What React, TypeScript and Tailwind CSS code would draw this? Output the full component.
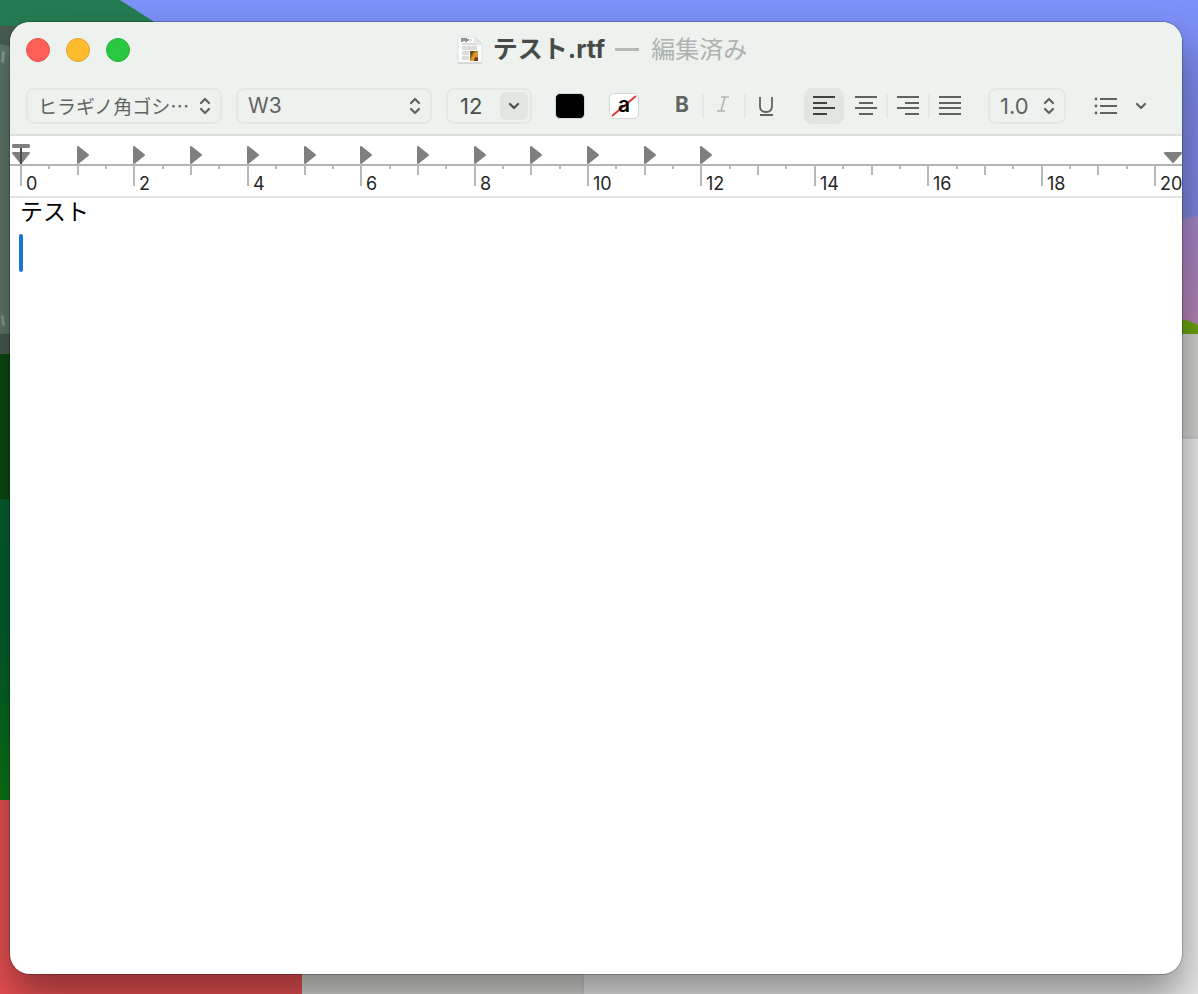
import { useEffect, useRef, useState, type ReactNode } from 'react'

type Align = 'left' | 'center' | 'right' | 'justify'

const RULER_ORIGIN = 11
const CM_IN_PX = 56.7

const ALIGN_PATHS: Record<Align, string> = {
  left: 'M1 2h22M1 8h14M1 13h22M1 19h14',
  center: 'M1 2h22M5 8h14M1 13h22M5 19h14',
  right: 'M1 2h22M9 8h14M1 13h22M9 19h14',
  justify: 'M1 2h22M1 8h22M1 13h22M1 19h22',
}

const ALIGNMENTS: { id: Align; label: string }[] = [
  { id: 'left', label: '左揃え' },
  { id: 'center', label: '中央揃え' },
  { id: 'right', label: '右揃え' },
  { id: 'justify', label: '両端揃え' },
]

function Wallpaper() {
  return (
    <svg
      className="absolute inset-0 size-full"
      viewBox="0 0 1198 994"
      preserveAspectRatio="none"
      aria-hidden="true"
    >
      <defs>
        <linearGradient id="sky" x1="0" y1="0" x2="0" y2="1">
          <stop offset="0" stopColor="#7b93fb" />
          <stop offset="0.3" stopColor="#7c86e6" />
          <stop offset="1" stopColor="#7f7dcc" />
        </linearGradient>
        <linearGradient id="mauve" x1="0" y1="0" x2="0" y2="1">
          <stop offset="0" stopColor="#a184c6" />
          <stop offset="1" stopColor="#b381b0" />
        </linearGradient>
        <linearGradient id="forest" x1="0" y1="0" x2="0" y2="1">
          <stop offset="0" stopColor="#04602f" />
          <stop offset="0.5" stopColor="#01602a" />
          <stop offset="1" stopColor="#0b7714" />
        </linearGradient>
      </defs>
      <rect width="1198" height="340" fill="url(#sky)" />
      <path d="M1170 222L1198 216V334H1170z" fill="url(#mauve)" />
      <path d="M1170 318Q1185 318 1198 325V334H1170z" fill="#68a30f" />
      <path d="M0 0H120L170 32H0z" fill="#257c52" />
      <rect y="26" width="30" height="328" fill="#475c50" />
      <path d="M0 44Q14 46 22 54V330Q12 334 0 334z" fill="#5e7868" />
      <path d="M2 51L5 52L4 63L1 62z" fill="#8a9c8f" />
      <path d="M1 315L4 316L5 326L2 325z" fill="#8a9c8f" />
      <rect y="354" width="30" height="146" fill="#0a4a10" />
      <rect y="499" width="30" height="302" fill="url(#forest)" />
      <rect y="800" width="302" height="194" fill="#e95052" />
      <rect x="302" y="900" width="281" height="94" fill="#d6d6d4" />
      <rect x="583" y="334" width="615" height="660" fill="#e8e8e8" />
      <rect x="1100" y="334" width="98" height="104" fill="#cfcfcd" />
      <path d="M1100 438H1198M583 900V994" stroke="#b9b9b8" />
    </svg>
  )
}

function DocumentIcon() {
  return (
    <svg className="h-7 w-[26px] shrink-0" viewBox="0 0 26 28" aria-hidden="true">
      <path d="M1 1H18L25 8V27H1z" fill="#fbfbfb" stroke="#dfe2df" />
      <path d="M1 27H25" stroke="#c4c7c4" />
      <path d="M18 1L17 9L25 8z" fill="#e6e8e6" stroke="#cfd2cf" strokeWidth="0.6" />
      <path d="M5 2V6M7 2V5M9 2V6M11 3V5" stroke="#4a4a4a" strokeWidth="1.2" />
      <path d="M13 4H15M5 8H17M5 11H20M5 13H20M5 16H12M5 18H12M5 21H12M5 23H12" stroke="#bcc0c0" strokeWidth="1.2" />
      <rect x="13" y="15" width="8" height="10" fill="#9b6a1c" />
      <path d="M13 25L17 17L21 15V20L17 25z" fill="#d99a27" />
      <path d="M13 15H17L14 20z" fill="#5c4c2a" />
      <path d="M18 21L21 22V25H17z" fill="#6f3b16" />
    </svg>
  )
}

function UpDownIcon() {
  return (
    <svg className="h-5 w-3" viewBox="0 0 12 20" fill="none" aria-hidden="true">
      <path
        d="M2 7L6 3L10 7M2 13L6 17L10 13"
        stroke="currentColor"
        strokeWidth="2.2"
        strokeLinecap="round"
        strokeLinejoin="round"
      />
    </svg>
  )
}

function DownIcon() {
  return (
    <svg className="h-3 w-3" viewBox="0 0 12 12" fill="none" aria-hidden="true">
      <path
        d="M2 4L6 8L10 4"
        stroke="currentColor"
        strokeWidth="2.2"
        strokeLinecap="round"
        strokeLinejoin="round"
      />
    </svg>
  )
}

interface PopupProps {
  label: string
  options: string[]
  className: string
  textClassName: string
}

function Popup({ label, options, className, textClassName }: PopupProps) {
  return (
    <div className={`grid shrink-0 items-center text-[#5f6461] ${className}`}>
      <select
        aria-label={label}
        className={`col-start-1 row-start-1 h-9 w-full appearance-none rounded-lg border-2 border-[#e3e8e4] bg-transparent pr-7 pl-[10px] outline-none ${textClassName}`}
      >
        {options.map((option) => (
          <option key={option}>{option}</option>
        ))}
      </select>
      <span className="pointer-events-none col-start-1 row-start-1 mr-[11px] justify-self-end">
        <UpDownIcon />
      </span>
    </div>
  )
}

function Divider() {
  return <span className="h-6 w-[2px] shrink-0 bg-[#e3e8e4]" />
}

interface StyleButtonProps {
  label: string
  className?: string
  children: ReactNode
}

function StyleButton({ label, className = '', children }: StyleButtonProps) {
  return (
    <button
      type="button"
      aria-label={label}
      className={`flex h-9 w-10 shrink-0 items-center justify-center ${className}`}
    >
      {children}
    </button>
  )
}

function TitleBar() {
  return (
    <header className="grid h-14 grid-cols-[1fr_auto_1fr] items-center pr-1 pl-4">
      <div className="flex gap-4">
        <button type="button" aria-label="閉じる" className="size-6 rounded-full border border-[#e2544c] bg-[#fe5f57]" />
        <button type="button" aria-label="しまう" className="size-6 rounded-full border border-[#dfa32b] bg-[#febc2e]" />
        <button type="button" aria-label="フルスクリーン" className="size-6 rounded-full border border-[#24b03a] bg-[#28c840]" />
      </div>
      <h1 className="flex items-center text-2xl whitespace-nowrap">
        <DocumentIcon />
        <span className="ml-[10px] text-[25px] font-bold text-[#474b48]">テスト.rtf</span>
        <span className="mx-[10px] h-[3px] w-6 bg-[#b4b9b5]" />
        <span className="ml-[2px] text-[#aeb3af]">編集済み</span>
      </h1>
    </header>
  )
}

function Toolbar() {
  const [align, setAlign] = useState<Align>('left')

  return (
    <div className="flex h-[58px] items-center border-b-2 border-[#dcdfdc] px-4 text-[#5f6461]">
      <Popup
        label="フォント"
        options={['ヒラギノ角ゴシ…', 'Helvetica']}
        className="w-[196px]"
        textClassName="font-['Noto_Sans_CJK_JP',sans-serif] text-[19px]"
      />
      <Popup
        label="書体"
        options={['W3', 'W6']}
        className="ml-[14px] w-[196px]"
        textClassName="pb-1 text-[21px]"
      />

      {/* Font size */}
      <div className="ml-[14px] flex h-9 w-[86px] shrink-0 items-center rounded-lg border-2 border-[#e3e8e4] pr-[2px] pl-3 text-[#4b4f4c]">
        <input
          aria-label="サイズ"
          defaultValue="12"
          className="w-full min-w-0 bg-transparent text-[22px] outline-none"
        />
        <button
          type="button"
          aria-label="サイズを選択"
          className="flex h-7 w-7 shrink-0 items-center justify-center rounded-md bg-[#e1e6e2]"
        >
          <DownIcon />
        </button>
      </div>

      {/* Colours */}
      <button
        type="button"
        aria-label="文字の色"
        className="ml-[23px] h-[26px] w-[30px] shrink-0 rounded-[5px] border border-[#d5dad6] bg-black"
      />
      <button
        type="button"
        aria-label="背景の色"
        className="ml-6 grid h-[26px] w-[30px] shrink-0 place-items-center rounded-[5px] border border-[#d2d7d3] bg-white"
      >
        <svg className="col-start-1 row-start-1 h-6 w-7" viewBox="0 0 28 24" aria-hidden="true">
          <path d="M2 22L26 2" stroke="#dd3a3f" strokeWidth="2" />
        </svg>
        <span className="col-start-1 row-start-1 pb-[2px] text-[21px] leading-5 font-semibold text-black">a</span>
      </button>

      {/* Character style */}
      <div className="ml-[23px] flex shrink-0 items-center">
        <StyleButton label="ボールド">
          <span className="pb-[2px] text-[21px] font-bold">B</span>
        </StyleButton>
        <Divider />
        <StyleButton label="イタリック" className="text-[#b0b5b1]">
          <svg className="h-5 w-4" viewBox="0 0 16 20" fill="none" stroke="currentColor" strokeWidth="1.6" aria-hidden="true">
            <path d="M5 1H13M1 15H9M9 1L5 15" />
          </svg>
        </StyleButton>
        <Divider />
        <StyleButton label="アンダーライン">
          <svg className="h-6 w-4" viewBox="0 0 16 24" fill="none" stroke="currentColor" strokeWidth="1.8" aria-hidden="true">
            <path d="M2 3V12Q2 18 8 18T14 12V3M2 21H15" />
          </svg>
        </StyleButton>
      </div>

      {/* Paragraph alignment */}
      <div className="ml-[18px] flex shrink-0 items-center">
        {ALIGNMENTS.map(({ id, label }, index) => (
          <div key={id} className="flex items-center">
            {index > 0 && (
              <span className={`h-6 w-[2px] ${index > 1 ? 'bg-[#e3e8e4]' : 'bg-transparent'}`} />
            )}
            <button
              type="button"
              aria-label={label}
              aria-pressed={align === id}
              onClick={() => { setAlign(id) }}
              className={`flex h-9 w-10 items-center justify-center rounded-lg pb-[2px] ${
                align === id ? 'bg-[#e1e6e2] text-[#3f4340]' : ''
              }`}
            >
              <svg className="h-[21px] w-6" viewBox="0 0 24 21" fill="none" aria-hidden="true">
                <path d={ALIGN_PATHS[id]} stroke="currentColor" strokeWidth="1.8" />
              </svg>
            </button>
          </div>
        ))}
      </div>

      <Popup
        label="行間隔"
        options={['1.0', '1.5', '2.0']}
        className="ml-[18px] w-[78px]"
        textClassName="pb-1 text-[22px]"
      />

      <button
        type="button"
        aria-label="リスト"
        className="ml-7 flex h-9 shrink-0 items-center gap-[17px]"
      >
        <svg className="h-[18px] w-6" viewBox="0 0 24 18" fill="none" stroke="currentColor" strokeWidth="1.8" aria-hidden="true">
          <path d="M6 2H23M6 9H23M6 16H23" />
          <path d="M2 2H2.01M2 9H2.01M2 16H2.01" strokeWidth="2.8" strokeLinecap="round" />
        </svg>
        <DownIcon />
      </button>
    </div>
  )
}

function Ruler() {
  const ref = useRef<HTMLDivElement>(null)
  const [width, setWidth] = useState(0)

  useEffect(() => {
    const element = ref.current
    if (!element) return
    const observer = new ResizeObserver(() => { setWidth(element.clientWidth) })
    observer.observe(element)
    return () => { observer.disconnect() }
  }, [])

  const halfCount = Math.max(0, Math.floor(((width - RULER_ORIGIN) / CM_IN_PX) * 2) + 1)
  const halves = Array.from({ length: halfCount }, (_, i) => i)
  const tabStops = Array.from({ length: 12 }, (_, i) => i + 1)
  const at = (cm: number) => Math.round(RULER_ORIGIN + cm * CM_IN_PX)

  return (
    <div ref={ref} className="border-b-2 border-[#e2e4e2]">
      <svg className="block h-[60px] w-full" role="img" aria-label="ルーラ">
        <line x1="0" y1="29" x2="100%" y2="29" stroke="#b4b4b4" strokeWidth="2" />
        {halves.map((half) => {
          const cm = half / 2
          const length = half % 4 === 0 ? 21 : half % 2 === 0 ? 10 : 4
          return (
            <g key={half}>
              <rect x={at(cm) - 1} y="29" width="2" height={length} fill="#b8b8b8" />
              {half % 4 === 0 && (
                <text x={at(cm) + 5} y="54" fontSize="18" fill="#262626">
                  {cm}
                </text>
              )}
            </g>
          )
        })}
        {tabStops.map((cm) => (
          <path
            key={cm}
            d={`M${at(cm)} 11L${at(cm) + 10} 19L${at(cm)} 27z`}
            fill="#7f7f7f"
            stroke="#7f7f7f"
            strokeWidth="2"
            strokeLinejoin="round"
          />
        ))}
        {/* First line and left indent */}
        <g fill="#7f7f7f">
          <rect x="2" y="8" width="18" height="4" rx="1.5" />
          <path d="M3 17H19L11 27z" stroke="#7f7f7f" strokeWidth="2" strokeLinejoin="round" />
          <rect x="10" y="12" width="2" height="16" fill="#4a4a4a" />
        </g>
        {/* Right indent */}
        <svg x="100%" overflow="visible">
          <path
            d="M-17 17H-1L-9 26z"
            fill="#7f7f7f"
            stroke="#7f7f7f"
            strokeWidth="2"
            strokeLinejoin="round"
          />
        </svg>
      </svg>
    </div>
  )
}

function Editor() {
  return (
    <div className="relative flex flex-1">
      <textarea
        aria-label="本文"
        defaultValue={'テスト\n'}
        spellCheck={false}
        className="w-full resize-none bg-transparent px-[10px] text-[23px] leading-7 text-black outline-none"
      />
      <span className="absolute top-9 left-[9px] h-[38px] w-1 rounded-sm bg-[#1b76d1]" />
    </div>
  )
}

export default function App() {
  return (
    <div className="relative flex min-h-screen flex-col overflow-hidden pt-[22px] pr-4 pb-5 pl-[10px] font-['Inter','Noto_Sans_CJK_JP',sans-serif]">
      <Wallpaper />
      <main
        lang="ja"
        className="relative flex flex-1 flex-col rounded-[20px] bg-white shadow-[0_0_0_1px_rgba(0,0,0,0.22),0_22px_40px_rgba(0,0,0,0.4)]"
      >
        <div className="rounded-t-[20px] bg-[#edf2ee]">
          <TitleBar />
          <Toolbar />
        </div>
        <Ruler />
        <Editor />
      </main>
    </div>
  )
}
